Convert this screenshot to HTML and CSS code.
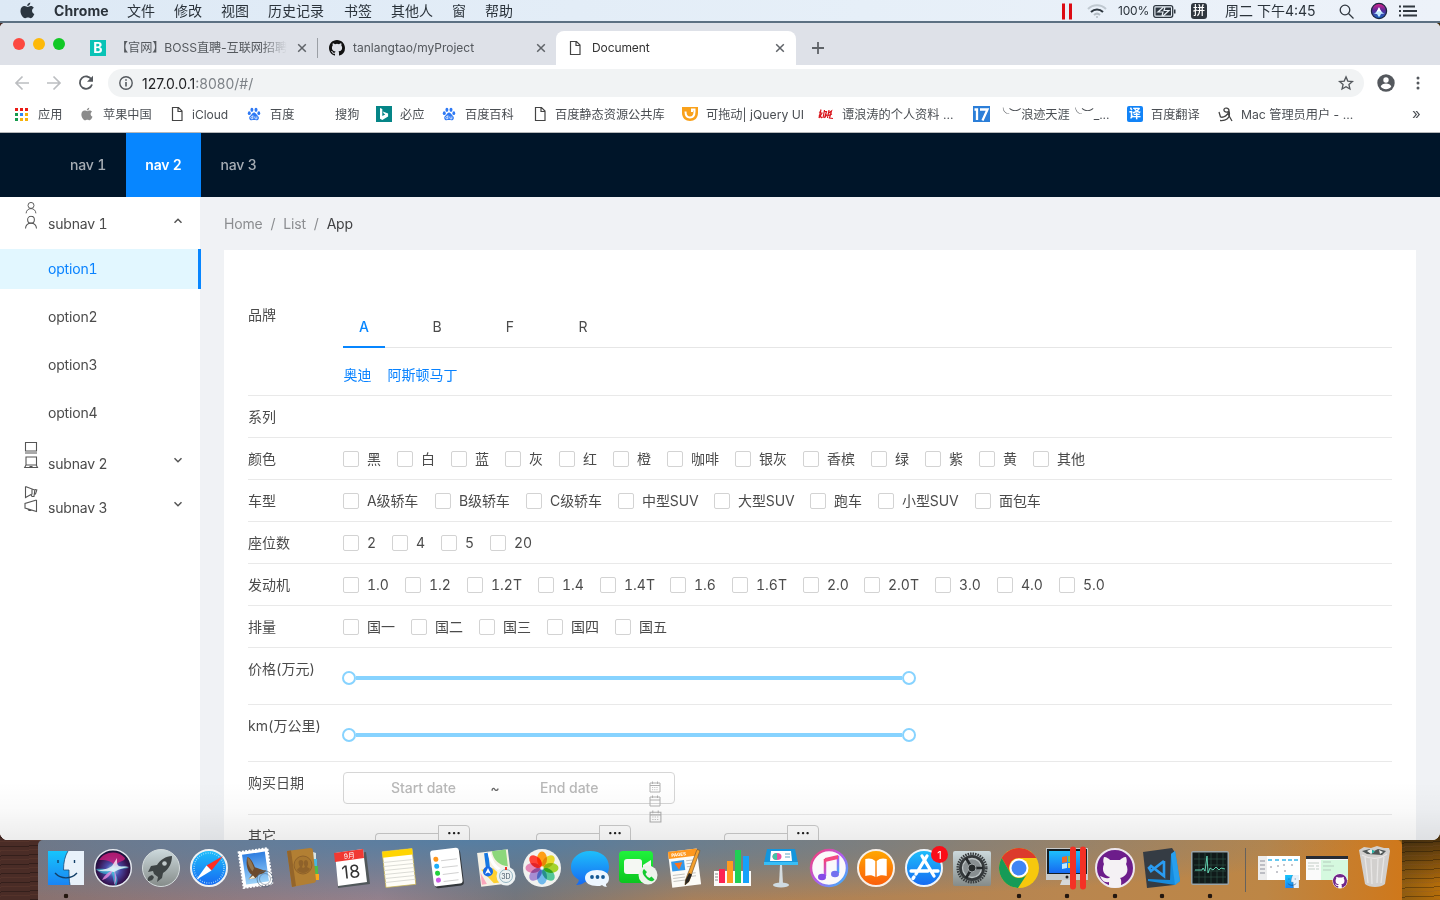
FILE: index.html
```html
<!DOCTYPE html>
<html lang="zh-CN">
<head>
<meta charset="utf-8">
<title>Document</title>
<link rel="stylesheet" href="styles.css">
</head>
<body>
<svg class="defs" width="0" height="0">
  <defs>
    <symbol id="apple" viewBox="0 0 16 18"><path d="M11 .5c.1 1.9-1.500 3.700-3.300 3.700C7.500 2.400 9.200.7 11 .5zM8.300 5.200c.8 0 1.700-.9 3.200-.9 1.200 0 2.500.7 3.200 1.800-2.800 1.700-2.300 5.500.6 6.600-.6 1.700-2.100 4.500-3.900 4.500-1.100 0-1.500-.7-2.900-.7s-1.900.7-3 .7C3 17.200.5 12.900.5 9.500c0-3.300 2.100-5.200 4.300-5.200 1.500 0 2.500.9 3.500.9z"/></symbol>
    <symbol id="file" viewBox="0 0 16 16"><path d="M2.500 1.500h6l3.500 3.500v9.500h-9.500zM8 1.500v4h4" fill="none" stroke="#444" stroke-width="1.200"/></symbol>
    <symbol id="close" viewBox="0 0 10 10"><path d="M1.200 1.200l7.600 7.600M8.800 1.200L1.200 8.800" fill="none" stroke="#5f6368" stroke-width="1.500"/></symbol>
    <symbol id="paw" viewBox="0 0 16 16"><g fill="#2d78f4"><ellipse cx="5.600" cy="3.200" rx="1.700" ry="2.400"/><ellipse cx="10.300" cy="3.200" rx="1.700" ry="2.400"/><ellipse cx="2.600" cy="7" rx="1.700" ry="2.200"/><ellipse cx="13.500" cy="7" rx="1.600" ry="2.200"/><path d="M8 6.300c1.500 0 2.200 1.500 3.500 2.800 1.500 1.400 2.500 2.500 1.900 4.300-.8 2.400-3.200 1.500-5.400 1.500s-4.600.9-5.300-1.500c-.6-2 .6-3.100 2-4.300C6 7.800 6.500 6.300 8 6.300z"/></g><path d="M6.700 9.500v4M6.500 11.100c-2-.5-2.300.5-2.200 1.500.2 1 1.500 1 2.400.6M9 10.800v1.900c0 .8.800.8 2.300.8v-2.700" fill="none" stroke="#fff" stroke-width=".9"/></symbol>
    <symbol id="cal" viewBox="0 0 12 12"><path d="M1 2h10v9H1zM1 4.500h10M3.500.5v2.500M8.500.5v2.500" fill="none" stroke="#b0b0b0"/><path d="M3 6.500h6M3 8.700h6" stroke="#c4c4c4" stroke-dasharray="1.200 1"/></symbol>
    <symbol id="calplain" viewBox="0 0 12 12"><path d="M1 2h10v9H1zM1 5h10M3.500.5v2.500M8.500.5v2.500" fill="none" stroke="#b0b0b0"/></symbol>
    <symbol id="user" viewBox="0 0 14 14"><circle cx="7" cy="4.300" r="3.500"/><path d="M1.300 13.500c.2-3.500 2.700-5.500 5.700-5.500s5.500 2 5.700 5.500"/></symbol>
    <symbol id="down" viewBox="0 0 10 8"><path d="M1.500 2.300L5 5.700l3.500-3.400" fill="none" stroke="#555" stroke-width="1.500"/></symbol>
    <symbol id="octocat" viewBox="0 0 16 16"><path d="M8 0C3.580 0 0 3.580 0 8c0 3.540 2.290 6.530 5.470 7.590.4.070.55-.17.55-.38 0-.19-.01-.82-.01-1.490-2.010.37-2.530-.49-2.690-.94-.09-.23-.48-.94-.82-1.130-.28-.15-.68-.52-.01-.53.63-.01 1.080.58 1.230.82.72 1.210 1.870.87 2.330.66.070-.52.28-.87.51-1.070-1.780-.2-3.640-.89-3.640-3.950 0-.87.31-1.590.82-2.150-.08-.2-.36-1.020.08-2.120 0 0 .67-.21 2.200.82a7.600 7.600 0 014 0c1.530-1.040 2.200-.82 2.200-.82.44 1.100.16 1.920.08 2.120.51.56.82 1.270.82 2.150 0 3.070-1.870 3.750-3.650 3.950.29.25.54.73.54 1.480 0 1.070-.01 1.930-.01 2.200 0 .21.15.46.55.38A8 8 0 0016 8c0-4.420-3.580-8-8-8z"/></symbol>
    <symbol id="finder" viewBox="0 0 36 34"><path d="M0 0h36v34H0z" fill="#e8f1fa"/><path d="M0 0h20c-3 5-4.500 11-4.500 19H21c0 5 0 10 1 15H0z" fill="url(#gFinder)"/><path d="M20 0c-3 5-4.500 11-4.500 19H21c0 5 0 10 1 15" fill="none" stroke="#1c4d79" stroke-width=".8"/><path d="M10 9v3M26.500 9v3M7 22c6 6.500 16 6.500 22 0" fill="none" stroke="#123f68" stroke-width="1.400"/></symbol>
    <linearGradient id="gFinder" x2="0" y2="1"><stop stop-color="#16c5fc"/><stop offset="1" stop-color="#1a84f4"/></linearGradient>
    <linearGradient id="gSil" x2="0" y2="1"><stop stop-color="#ccd9dc"/><stop offset="1" stop-color="#858b89"/></linearGradient>
    <linearGradient id="gBlue" x2="0" y2="1"><stop stop-color="#1ebffb"/><stop offset="1" stop-color="#1669f2"/></linearGradient>
    <linearGradient id="gSky" x2="0" y2="1"><stop stop-color="#2f7ee0"/><stop offset="1" stop-color="#9ed3f8"/></linearGradient>
    <linearGradient id="gOrange" x2="0" y2="1"><stop stop-color="#ffa800"/><stop offset="1" stop-color="#fb5d0c"/></linearGradient>
    <linearGradient id="gGreen" x2="0" y2="1"><stop stop-color="#20f23c"/><stop offset="1" stop-color="#0bc51f"/></linearGradient>
    <linearGradient id="gMusic" x1="0" x2="1" y2="1"><stop stop-color="#fb3b68"/><stop offset=".5" stop-color="#b35cf0"/><stop offset="1" stop-color="#2bbdfa"/></linearGradient>
    <radialGradient id="gSiri" cx=".5" cy=".55" r=".55"><stop stop-color="#7fd9ee"/><stop offset=".35" stop-color="#4a4aa8"/><stop offset=".75" stop-color="#35134f"/><stop offset="1" stop-color="#101433"/></radialGradient>
    <linearGradient id="gSiriTop" x2="0" y2="1"><stop stop-color="#e2208b"/><stop offset=".45" stop-color="#5a2b9a"/><stop offset="1" stop-color="#1268c0"/></linearGradient>
  </defs>
</svg>

<div class="desktop">
  <header class="menubar">
    <div class="menus">
      <svg class="m-apple" width="15" height="17"><use href="#apple"/></svg>
      <b>Chrome</b><span>文件</span><span>修改</span><span>视图</span><span>历史记录</span><span>书签</span><span>其他人</span><span>窗</span><span>帮助</span>
    </div>
    <div class="status">
      <svg width="12" height="17" viewBox="0 0 12 17"><path d="M2.500 .5v16M9.500 .5v16" stroke="#dc0b14" stroke-width="3"/></svg>
      <svg width="20" height="15" viewBox="0 0 20 15" fill="none" stroke-width="2"><path d="M1 5c5-5 13-5 18 0" stroke="#c0c9d1"/><path d="M4 8c3.500-3.500 8.500-3.500 12 0" stroke="#2f3841"/><path d="M7 11c2-1.800 4-1.800 6 0" stroke="#b3bcc4"/><circle cx="10" cy="13" r="1" fill="#b3bcc4"/></svg>
      <span class="pct">100%</span>
      <svg width="23" height="13" viewBox="0 0 23 13"><rect x=".7" y=".7" width="19" height="11.600" rx="2" fill="none" stroke="#2f3841" stroke-width="1.300"/><path d="M2.500 2.500h15.500v8H2.500zM21 4.500h1.500v4H21z" fill="#2f3841"/><path d="M10.500 2L5 7h5l-1 4M10 11l6-5.500h-5l1-3.500" stroke="#e9f0f7" stroke-width="1.200" fill="none"/></svg>
      <span class="ime">拼</span>
      <span class="clock">周二 下午4:45</span>
      <svg width="15" height="15" viewBox="0 0 15 15" fill="none" stroke="#30373f" stroke-width="1.300"><circle cx="6" cy="6" r="4.800"/><path d="M9.500 9.500l5 5"/></svg>
      <svg width="16" height="16" viewBox="0 0 38 38"><circle cx="19" cy="19" r="18" fill="url(#gSiriTop)" stroke="#1b2440" stroke-width="3"/><path d="M6 26c6-2 9-8 13-16 3 8 7 12 13 16-6-1-9-2-11 6h-4c-1-7-5-7-11-6z" fill="#bfe9ff"/><path d="M13 22l6-12 6 12-6-3z" fill="#fff"/></svg>
      <svg width="18" height="12" viewBox="0 0 18 12" stroke="#30373f" stroke-width="2"><path d="M0 1.500h2M4 1.500h12M0 6h2M4 6h14M0 10.500h2M4 10.500h14"/></svg>
    </div>
  </header>

  <main class="window">
    <div class="tabstrip">
      <div class="lights"><i class="red"></i><i class="yellow"></i><i class="green"></i></div>
      <div class="tab tab-boss">
        <span class="boss">B</span><span class="tab-title fade">【官网】BOSS直聘-互联网招聘神</span><svg width="10" height="10"><use href="#close"/></svg>
      </div>
      <div class="tab tab-git">
        <svg width="16" height="16" fill="#111"><use href="#octocat"/></svg><span class="tab-title">tanlangtao/myProject</span><svg width="10" height="10"><use href="#close"/></svg>
      </div>
      <div class="tab tab-doc">
        <svg width="16" height="16"><use href="#file"/></svg><span class="tab-title">Document</span><svg width="10" height="10"><use href="#close"/></svg>
      </div>
      <svg class="plus" width="12" height="12" viewBox="0 0 12 12"><path d="M6 0v12M0 6h12" stroke="#5f6368" stroke-width="1.800"/></svg>
    </div>
    <div class="toolbar">
      <svg width="16" height="16" viewBox="0 0 16 16" fill="none" stroke="#bcbec1" stroke-width="1.700"><path d="M15 8H2M8.500 1.500L2 8l6.500 6.500"/></svg>
      <svg width="16" height="16" viewBox="0 0 16 16" fill="none" stroke="#bcbec1" stroke-width="1.700"><path d="M1 8h13M7.500 1.500L14 8l-6.500 6.500"/></svg>
      <svg width="16" height="16" viewBox="0 0 16 16"><path d="M13.500 4.600A6.200 6.200 0 1014 9.500" fill="none" stroke="#54585d" stroke-width="1.800"/><path d="M15 .7v6H9z" fill="#54585d"/></svg>
      <div class="address">
        <svg width="14" height="14" viewBox="0 0 14 14" fill="none" stroke="#54585d"><circle cx="7" cy="7" r="6.200" stroke-width="1.400"/><path d="M7 6v4.500M7 3.200v1.600" stroke-width="1.600"/></svg>
        <span class="url">127.0.0.1<em>:8080/#/</em></span>
        <svg width="16" height="16" viewBox="0 0 24 24"><path d="M12 2.800l2.700 6.400 6.900.6-5.200 4.500 1.500 6.700-5.900-3.500L6.100 21l1.500-6.700-5.200-4.500 6.900-.6z" fill="none" stroke="#54585d" stroke-width="2"/></svg>
      </div>
      <svg class="profile" width="18" height="18" viewBox="0 0 18 18"><circle cx="9" cy="9" r="8.700" fill="#54585d"/><circle cx="9" cy="6" r="2.700" fill="#fff"/><path d="M3.700 12.500c1.200-4 9.400-4 10.600 0-2.500 3.500-8.100 3.500-10.600 0z" fill="#fff"/></svg>
      <svg width="4" height="14" viewBox="0 0 4 14" fill="#54585d"><circle cx="2" cy="2" r="1.500"/><circle cx="2" cy="7" r="1.500"/><circle cx="2" cy="12" r="1.500"/></svg>
    </div>
    <div class="bookmarks">
      <div><svg width="13" height="13" viewBox="0 0 13 13"><path d="M0 0h3v3H0zM5 0h3v3H5zM10 0h3v3h-3z" fill="#ea1b15"/><path d="M0 5h3v3H0zM0 10h3v3H0z" fill="#169b4d"/><path d="M5 5h3v3H5z" fill="#2e87f5"/><path d="M10 5h3v3h-3zM5 10h3v3H5zM10 10h3v3h-3z" fill="#f7b20a"/></svg><span>应用</span></div>
      <div><svg width="12" height="14" fill="#8b8b8b"><use href="#apple"/></svg><span>苹果中国</span></div>
      <div><svg width="16" height="16"><use href="#file"/></svg><span>iCloud</span></div>
      <div><svg width="14" height="16"><use href="#paw"/></svg><span>百度</span></div>
      <div><span>搜狗</span></div>
      <div><svg width="16" height="16" viewBox="0 0 16 16"><path d="M0 0h16v16H0z" fill="#058587"/><path d="M4 2l2.300.9v7.200l3-1.500-1.500-1-1-2.200 5.300 2v3L6.300 14 4 12.700z" fill="#fff"/></svg><span>必应</span></div>
      <div><svg width="14" height="16"><use href="#paw"/></svg><span>百度百科</span></div>
      <div><svg width="16" height="16"><use href="#file"/></svg><span>百度静态资源公共库</span></div>
      <div><svg width="16" height="14" viewBox="0 0 16 14"><path d="M0 0h16v6c0 5-3.500 8-8 8s-8-3-8-8z" fill="#f9a11b"/><path d="M3.500 4.500c0 4 1.500 6 4.500 6s4.500-2 4.500-6V2.500H10V5" fill="none" stroke="#fff" stroke-width="2"/></svg><span>可拖动| jQuery UI</span></div>
      <div><svg width="16" height="12" viewBox="0 0 16 12" fill="none" stroke="#d9131a" stroke-width="1.200"><path d="M3 1.500L1 10l3-5-3-1M1 7l3 3M6.500 2L5 10M6 3.500h2.500L6.500 10l2.500-3.500M11 2l-1.500 8M10 5.500l3.500-2.500-2 7 3.500.5M9 8l5-2"/></svg><span>谭浪涛的个人资料 ...</span></div>
      <div><svg width="17" height="16" viewBox="0 0 17 16"><path d="M0 0h17v16H0z" fill="#2b7ed8"/><path d="M1.500 3.500H4V14M7 3.500h7.500l-5 11" fill="none" stroke="#fff" stroke-width="2.300"/></svg><span class="sky">╰︶浪迹天涯╰︶_...</span></div>
      <div><b class="yi">译</b><span>百度翻译</span></div>
      <div><svg width="15" height="16" viewBox="0 0 15 16" fill="none" stroke="#444" stroke-width="1.300"><path d="M1 6l1.500 5c3 1 8-2 8.500-6 .3-3-4.500-4-5-1.500S9 7 11 5c1 3 .5 6-2 8s-5 1.500-7 1.500M10 8l4 7"/></svg><span>Mac 管理员用户 - ...</span></div>
      <div class="more">»</div>
    </div>

    <nav class="topnav"><a>nav 1</a><a class="on">nav 2</a><a>nav 3</a></nav>
    <div class="app">
      <aside>
        <div class="sub first"><svg width="14" height="29" viewBox="0 0 14 29" class="line"><use href="#user" x="1" y="-.5" width="12" height="12.500"/><use href="#user" x="0" y="13.500" width="14" height="13.500"/></svg><span>subnav 1</span><svg class="flip" width="10" height="8"><use href="#down"/></svg></div>
        <ul><li class="on">option1</li><li>option2</li><li>option3</li><li>option4</li></ul>
        <div class="sub"><svg width="14" height="28" viewBox="0 0 14 28" class="line"><path d="M1.500 .5h11v8.500h-11zM1 11h12M2 15h10.500v8H2zM2 23L.7 25.500h12.800l-1.300-2.500M5.500 24.500h3"/></svg><span>subnav 2</span><svg width="10" height="8"><use href="#down"/></svg></div>
        <div class="sub"><svg width="14" height="28" viewBox="0 0 14 28" class="line"><path d="M1.500.5v11l5.500-3 1 2h2l.8-6.500L1.500.5M8 3.500v5M10.800 3.500l2 .5-1.300 4h-1M12.500 14v11.500L1 22v-4.500L12.500 14M4 23c.5 1.500 2 2 3.500 1"/></svg><span>subnav 3</span><svg width="10" height="8"><use href="#down"/></svg></div>
      </aside>
      <section class="content">
        <div class="crumbs"><span>Home</span><i>/</i><span>List</span><i>/</i><b>App</b></div>
        <div class="panel">
          <div class="row brand"><label>品牌</label>
            <div class="brand-body">
              <div class="letters"><a class="on">A</a><a>B</a><a>F</a><a>R</a></div>
              <div class="makes"><a>奥迪</a><a>阿斯顿马丁</a></div>
            </div>
          </div>
          <div class="row"><label>系列</label></div>
          <div class="row"><label>颜色</label><div class="checks colors"><span>黑</span><span>白</span><span>蓝</span><span>灰</span><span>红</span><span>橙</span><span>咖啡</span><span>银灰</span><span>香槟</span><span>绿</span><span>紫</span><span>黄</span><span>其他</span></div></div>
          <div class="row"><label>车型</label><div class="checks types"><span>A级轿车</span><span>B级轿车</span><span>C级轿车</span><span>中型SUV</span><span>大型SUV</span><span>跑车</span><span>小型SUV</span><span>面包车</span></div></div>
          <div class="row"><label>座位数</label><div class="checks seats"><span>2</span><span>4</span><span>5</span><span>20</span></div></div>
          <div class="row"><label>发动机</label><div class="checks engines"><span>1.0</span><span>1.2</span><span>1.2T</span><span>1.4</span><span>1.4T</span><span>1.6</span><span>1.6T</span><span>2.0</span><span>2.0T</span><span>3.0</span><span>4.0</span><span>5.0</span></div></div>
          <div class="row"><label>排量</label><div class="checks emission"><span>国一</span><span>国二</span><span>国三</span><span>国四</span><span>国五</span></div></div>
          <div class="row tall"><label>价格(万元)</label><div class="slider"><i></i><b></b><i></i></div></div>
          <div class="row tall"><label>km(万公里)</label><div class="slider"><i></i><b></b><i></i></div></div>
          <div class="row date"><label>购买日期</label><div class="range"><span>Start date</span><em>~</em><span>End date</span><div class="cals"><svg width="12" height="12"><use href="#cal"/></svg><svg width="12" height="12"><use href="#calplain"/></svg><svg width="13" height="13"><use href="#cal"/></svg></div></div></div>
          <div class="row other"><label>其它</label><div class="groups"><div><i></i><b>···</b></div><div><i></i><b>···</b></div><div><i></i><b>···</b></div></div></div>
        </div>
      </section>
    </div>
    <div class="shade"></div>
  </main>

  <footer class="dock">
    <div class="apps">
      <svg class="run" viewBox="0 0 44 44"><use href="#finder" x="4" y="5" width="36" height="34"/></svg>
      <svg viewBox="0 0 44 44"><circle cx="22" cy="22" r="18.300" fill="url(#gSiri)" stroke="#e4e8ee" stroke-width="1.500"/><path d="M8 14c5-8 18-11 26-2 0 4-6 2-10 8-4-6-10-6-16-6z" fill="#d61f7d" opacity=".75"/><path d="M5 23c7-1 12 1 17 0s10-5 16-1c-5 1-10 0-15 4 3 4 5 8 2 14-3-4-3-9-4-13-5 2-12 1-16-4z" fill="#35cfe0" opacity=".6"/><path d="M22 24c-5 2-9 6-11 10 5-1 9-5 11-10zM23 24c1 6 1 11 0 15 3-4 3-10 0-15z" fill="#ee8fe0" opacity=".8"/><path d="M6 24c8 0 12-2 15-4l5-8c0 5 0 7 2 8 3 1 6 0 10 1-6 1-10 2-13 4s-4 0-6 0-8 1-13-1z" fill="#fff" opacity=".75"/></svg>
      <svg viewBox="0 0 44 44"><circle cx="22" cy="22" r="18.500" fill="url(#gSil)" stroke="#d5dcdd"/><path d="M33 10c-6 0-12 4-15 9l-6 1-3 6 5-1 1 3 4 3-1 5 5-4 1-5c6-4 9-10 9-17zM13 29c-3 1-5 3-4 6 3 0 5-1 6-4z" fill="#3e4445"/><circle cx="25.500" cy="17.500" r="2.300" fill="#c1c9ca"/></svg>
      <svg viewBox="0 0 44 44"><circle cx="22" cy="22" r="18" fill="url(#gBlue)" stroke="#f0f2f3" stroke-width="2"/><circle cx="22" cy="22" r="15" fill="none" stroke="#b7e4fd" stroke-width="1.500" stroke-dasharray=".7 1.600"/><path d="M36 10L19.500 19.500l5 5z" fill="#ff2d23"/><path d="M9 34l10.500-14.500 5 5z" fill="#fff"/></svg>
      <svg viewBox="0 0 44 44"><g transform="rotate(-8 22 22)"><path d="M7 4h29v36H7z" fill="#fff" stroke="#fff" stroke-width="2" stroke-dasharray="2 1.300"/><path d="M10 7h23v30H10z" fill="url(#gSky)"/><path d="M15 10c3 1 5 7 6 11 4 2 7 4 11 5-2 2-5 3-8 3l-4 3-7 0 4-4c-4-3-5-12-2-18z" fill="#6b4a2d"/><path d="M15 10c-1 5 0 10 3 15l2-3c-1-4-2-9-5-12z" fill="#94764f"/><path d="M13 32l5-3 2 3z" fill="#f5ecd0"/></g><circle cx="31" cy="33" r="8" fill="none" stroke="#4f6376" opacity=".6"/><circle cx="31" cy="33" r="5.500" fill="none" stroke="#4f6376" opacity=".5"/></svg>
      <svg viewBox="0 0 44 44"><path d="M31 6l3 1v6h-3z" fill="#d8e4e6"/><path d="M31 13h4v7h-4z" fill="#49b6e0"/><path d="M32 20h4v8h-4z" fill="#4ebb4a"/><path d="M33 28h4v6h-4z" fill="#f9a91c"/><path d="M5 5l23-3q3 0 3 3l3 29q0 3-3 3L10 41z" fill="#b27f33"/><path d="M5 5l4-.5L14 40l-4 1z" fill="#94652a"/><circle cx="21" cy="19" r="9" fill="#a87730" stroke="#8f622a"/><path d="M15 24c1-2 2-2 3-3-2-4-2-7 1-7s3 4 1 7l1 1 2-1c-2-4-1-7 1-7s3 4 1 7c1 1 3 1 3 2-3 5-10 5-13 1z" fill="#8f622a"/></svg>
      <svg viewBox="0 0 44 44"><path d="M6 10l30-4 4 32-32 4z" fill="#51585b"/><path d="M5 7l28-4 4 33-29 4z" fill="#fff"/><path d="M4 7l29-4 1 9-29 4z" fill="#f13932"/><text x="19.500" y="12" transform="rotate(-7 22 11)" class="i-mon">9月</text><text x="21" y="32" transform="rotate(-6 22 27)" class="i-day">18</text></svg>
      <svg viewBox="0 0 44 44"><g transform="rotate(-6 22 22)"><path d="M7 4h30v36H7z" fill="#fffef8" stroke="#cab34d" stroke-width=".7"/><path d="M7 4h30v6H7z" fill="#ffd400"/><path d="M7 15h30M7 19h30M7 23h30M7 27h30M7 31h30M7 35h30" stroke="#dcdcd6"/></g></svg>
      <svg viewBox="0 0 44 44"><g transform="rotate(-7 22 22)"><rect x="8" y="5" width="29" height="36" rx="3" fill="#33373b"/><rect x="7" y="3" width="29" height="36" rx="3" fill="#fff"/><circle cx="12" cy="12" r="2.500" fill="#ff951b"/><circle cx="12" cy="19" r="2.500" fill="#1badf8"/><circle cx="12" cy="26" r="2.500" fill="#21d13d"/><circle cx="12" cy="33" r="2.500" fill="#ca5de6"/><path d="M17 14h16M17 21h16M17 28h16M17 35h15" stroke="#d1d1d1"/></g></svg>
      <svg viewBox="0 0 44 44"><g transform="rotate(-7 22 22)"><path d="M6 5h31v34H6z" fill="#f5f1e5"/><path d="M21 5h14v17C27 20 21 14 21 5z" fill="#8cd77b"/><path d="M8 22h12l13 15H19z" fill="#ffd130"/><path d="M7 25l5 12H7z" fill="#fba6bb"/><path d="M15 6v19" stroke="#1678e2" stroke-width="4"/><path d="M18 6c1 12 7 20 18 22" fill="none" stroke="#fff" stroke-width="3"/></g><circle cx="15" cy="25.500" r="5" fill="#176ae5"/><path d="M15 22l3 6-3-1.500-3 1.500z" fill="#fff"/><circle cx="33" cy="30" r="9.500" fill="#edf2f3"/><circle cx="33" cy="30" r="6.500" fill="none" stroke="#7ca4b5" stroke-width=".8"/><path d="M33 21v3" stroke="#e32" stroke-width="2"/><text x="33" y="32.500" class="i-3d">3D</text></svg>
      <svg viewBox="0 0 44 44"><circle cx="22" cy="22" r="19" fill="#f2f2ef"/><g class="petals"><ellipse cx="22" cy="13" rx="5" ry="7.500" fill="#ff9e16"/><ellipse cx="22" cy="13" rx="5" ry="7.500" fill="#e8d92a" transform="rotate(45 22 22)"/><ellipse cx="22" cy="13" rx="5" ry="7.500" fill="#a4d32c" transform="rotate(90 22 22)"/><ellipse cx="22" cy="13" rx="5" ry="7.500" fill="#54c69a" transform="rotate(135 22 22)"/><ellipse cx="22" cy="13" rx="5" ry="7.500" fill="#71b9ec" transform="rotate(180 22 22)"/><ellipse cx="22" cy="13" rx="5" ry="7.500" fill="#a78dd2" transform="rotate(225 22 22)"/><ellipse cx="22" cy="13" rx="5" ry="7.500" fill="#e486b5" transform="rotate(270 22 22)"/><ellipse cx="22" cy="13" rx="5" ry="7.500" fill="#ff4237" transform="rotate(315 22 22)"/></g></svg>
      <svg viewBox="0 0 44 44"><path d="M22 5C11 5 3 12 3 21c0 6 3 10 8 13-1 3-2 4-3 5 4 0 7-1 9-3 13 3 24-5 24-15S33 5 22 5z" fill="url(#gBlue)"/><path d="M29 24c-7 0-12 3-12 8s5 8 12 8c2 0 4 0 5-1 1 1 3 2 5 2-1-1-1-2-1-3 2-1 3-3 3-6 0-5-5-8-12-8z" fill="#edf6ff"/><g fill="#155894"><circle cx="24" cy="31" r="1.900"/><circle cx="29.500" cy="31" r="1.900"/><circle cx="35" cy="31" r="1.900"/></g></svg>
      <svg viewBox="0 0 44 44"><rect x="3" y="5" width="34" height="32" rx="4" fill="url(#gGreen)"/><rect x="8" y="13" width="18" height="15" rx="3" fill="#f5f8f3"/><path d="M27 19l8-5v13l-8-5z" fill="#f5f8f3"/><circle cx="32" cy="29" r="9.500" fill="#eef3ec"/><path d="M28 23l3 3-1.500 2c1 2 2 3 4 4l2-1.500 3 3c-2 3-5 2-8-1-4-4-5-7-2.500-9.500z" fill="#13ca30"/></svg>
      <svg viewBox="0 0 44 44"><g transform="rotate(-7 22 22)"><path d="M7 4h29v36H7z" fill="#fcfbf7"/><path d="M7 4h29v7H7z" fill="#ff981e"/><path d="M9 14h13v10H9z" fill="#3299eb"/><path d="M12 16h8l-4 7z" fill="#fc721c"/><path d="M24 15h9M24 18h9M24 21h8M9 28h12M9 31h12M9 34h12M24 28h8M24 31h8" stroke="#c4c4c1"/><text x="10" y="9.500" class="i-pages">PAGES</text></g><path d="M34 3.500L22.500 34l-.5 5 4-3.500L37 4.500z" fill="#f5a12d" stroke="#7b5a33" stroke-width=".7"/><path d="M26 27l-3.500 7-.5 5 4-3.500 3-7z" fill="#282522"/></svg>
      <svg viewBox="0 0 44 44"><path d="M3 25h37v15H3z" fill="#fbfbf9"/><path d="M8 23h6v14H8z" fill="#fc2452"/><path d="M16 15h6v22h-6z" fill="#ff9b20"/><path d="M24 4h6v33h-6z" fill="#20cf55"/><path d="M32 10h6v27h-6z" fill="#14a2fa"/><path d="M4 28h3M4 31h3M4 34h3" stroke="#888"/></svg>
      <svg viewBox="0 0 44 44"><path d="M8 3h28l3 14H5z" fill="#1495dc"/><path d="M5 16h34v3H5z" fill="#38bef6"/><path d="M12 5h20l1 10H11z" fill="#fff"/><path d="M26 8h5M26 11h5" stroke="#5ca6c4"/><ellipse cx="18" cy="10.500" rx="4.500" ry="3.500" fill="#e953a1"/><path d="M18 7c-6 0-6 7 0 7z" fill="#3fc7a7"/><path d="M21 19h2l1 19h-4z" fill="#d4dce0"/><ellipse cx="22" cy="39" rx="8" ry="2.500" fill="#cfdbe2"/></svg>
      <svg viewBox="0 0 44 44"><circle cx="22" cy="22" r="18" fill="#fbf9fb" stroke="url(#gMusic)" stroke-width="2.500"/><path d="M18 30V14l13-3v16" fill="none" stroke="url(#gMusic)" stroke-width="2.500"/><path d="M18 12l13-3v4l-13 3z" fill="#f44a83"/><ellipse cx="15" cy="31" rx="4" ry="3.300" fill="#854be7"/><ellipse cx="28" cy="28" rx="4" ry="3.300" fill="#7370ef"/></svg>
      <svg viewBox="0 0 44 44"><circle cx="22" cy="22" r="18" fill="url(#gOrange)" stroke="#f7efe8" stroke-width="2"/><path d="M21.300 15c-3-3-7-3-10-2v17c4-1 7-1 10 1zM22.700 15c3-3 7-3 10-2v17c-4-1-7-1-10 1z" fill="#fff"/></svg>
      <svg viewBox="0 0 44 44"><circle cx="22" cy="22" r="18" fill="url(#gBlue)" stroke="#f0f5fa" stroke-width="2"/><path d="M20 10l12 20M25 10L14 28M9 25h17M31 25h5M12 31l-1 1.500" fill="none" stroke="#fff" stroke-width="3.300" stroke-linecap="round"/><circle cx="37.500" cy="8.500" r="8.500" fill="#fb0d18"/><text x="37.500" y="12.500" class="i-one">1</text></svg>
      <svg viewBox="0 0 44 44"><rect x="3" y="5" width="38" height="35" rx="2" fill="url(#gSil)"/><circle cx="22" cy="22" r="14.300" fill="none" stroke="#363a3c" stroke-width="2.500" stroke-dasharray="1.500 1"/><circle cx="22" cy="22" r="13" fill="#34383a"/><circle cx="22" cy="22" r="9.500" fill="#888e90" stroke="#bdc4c5" stroke-width="1.300"/><path d="M22 22h11M22 22l-6-10M22 22l-6 10" stroke="#24282a" stroke-width="2.500"/><circle cx="22" cy="22" r="4" fill="#272b2c" stroke="#9fa5a7"/></svg>
      <svg class="run" viewBox="0 0 44 44"><circle cx="22" cy="22" r="20" fill="#f7c80d"/><path d="M4.700 12A20 20 0 0139.300 12H22a10 10 0 00-8.700 15z" fill="#dc3a2c"/><path d="M4.700 12A20 20 0 0021 42l9.700-15a10 10 0 01-17.400 0z" fill="#169b57"/><circle cx="22" cy="22" r="9.500" fill="#fff"/><circle cx="22" cy="22" r="7.500" fill="#4085f4"/></svg>
      <svg class="run" viewBox="0 0 44 44"><path d="M1 2h42v32H1z" fill="#c8cbcc"/><path d="M2 3h40v25H2z" fill="#141d23"/><path d="M4 5h36v22H4z" fill="url(#gBlue)"/><path d="M17 11l5-1v6l-5 1z" fill="#f06a25"/><path d="M23 10h4v6h-4z" fill="#82c33c"/><path d="M17 18l5-1v5l-5 1z" fill="#bfeaff"/><path d="M23 17h4v5h-4z" fill="#fbc728"/><path d="M17 34h10l2 5H15z" fill="#d7d9da"/><circle cx="22" cy="31" r="1.500" fill="#222"/><path d="M28 3.500v37M38 3.500v37" stroke="#f43125" stroke-width="6" stroke-linecap="round"/></svg>
      <svg class="run" viewBox="0 0 44 44"><circle cx="22" cy="22" r="19" fill="#6d1d8b" stroke="#ede6ed" stroke-width="2"/><path d="M11 11c3 0 5 2 6 3h10c1-1 3-3 6-3 1 3 1 5 0 7 4 8-1 13-6 14 2 2 1 6 1 9-4 1-8 1-12 0v-5c-5 1-7-2-9-6 4 1 5 3 9 2l1-1c-5-1-9-6-6-13-1-2-1-4 0-7z" fill="#f4f1f4"/></svg>
      <svg class="run" viewBox="0 0 44 44"><path d="M3 6l29-4 2 3v34l-27 3z" fill="#353c44"/><path d="M31 8l4-3 5 30-5 4-27-4v-2l22 1z" fill="#168bdd"/><path d="M31 8l4-3 5 30-5 4z" fill="#279fee"/><path d="M24 15v15L11 20l-2 2 2 3 13-10" fill="none" stroke="#2a9cf2" stroke-width="2.600"/></svg>
      <svg class="run" viewBox="0 0 44 44"><rect x="3" y="5" width="38" height="34" rx="2" fill="#9aa5a8"/><path d="M4.500 6.500h35v31h-35z" fill="#101a1a"/><path d="M6 13h32M6 19h32M6 25h32M6 31h32M11 7v30M17 7v30M23 7v30M29 7v30M35 7v30" stroke="#2d5045" stroke-width=".7"/><path d="M7 24h7l1-2 2 3 2-15 1 17 2-5 3 2 3-3 3 3 2-2 4 1" fill="none" stroke="#69e0bd" stroke-width=".9"/></svg>
    </div>
    <i class="divider"></i>
    <svg class="thumb" width="44" height="44" viewBox="0 0 44 44"><path d="M1 10h42v24H1z" fill="#fff"/><path d="M1 10h9v24H1z" fill="#ededed"/><path d="M11 14h4M18 14h4M25 14h4M31 14h4M37 14h4" stroke="#67c8ef" stroke-width="2"/><path d="M3 15h5M3 19h5M3 23h5M3 27h5M13 21h2M20 20h2M26 19h2M34 19h2M19 26h2M27 25h2" stroke="#8d8f9b"/><use href="#finder" x="28" y="29" width="14" height="13"/></svg>
    <svg class="thumb" width="44" height="44" viewBox="0 0 44 44"><path d="M1 10h42v24H1z" fill="#fafafa"/><path d="M1 10h42v3H1z" fill="#272b34"/><path d="M16 14h27v20H16z" fill="#d5f9df"/><path d="M3 17h8M3 20h6M3 23h7M11 17h3M11 20h3M11 23h3M18 16h8M18 20h11M18 24h8" stroke="#a9b9af" stroke-width=".7"/><circle cx="35" cy="35" r="7.500" fill="#fff"/><use href="#octocat" x="28" y="28" width="14" height="14" fill="#70288a"/></svg>
    <svg class="thumb" width="44" height="44" viewBox="0 0 44 44"><path d="M6 4l5-3 7 1 6-2 7 2h5l1 3-5 33c-4 4-16 4-20 0z" fill="#d2d0ce"/><path d="M9 5l8-2 4 2 4-2 8 2-4 4-15-1z" fill="#4f5656"/><path d="M14 5l4-2 3 3-3 2zM26 4l4 2-3 2z" fill="#eef1ee"/><path d="M19 3.500l3 2-3 2z" fill="#22b4a7"/><path d="M12 11l3 26M18 13l1 25M25 13l-1 24M31 11l-3 26M9 9c9 5 18 4 25-1" fill="none" stroke="#f1f0ef" stroke-width="1.300" opacity=".7"/></svg>
  </footer>
</div>
</body>
</html>
```

FILE: styles.css
```css
*, *::before { box-sizing: border-box; }
body { margin: 0; font-family: Inter, "Noto Sans CJK SC", sans-serif; font-size: 14px; color: #4b4b4b; }
svg { display: block; flex: none; overflow: visible; }
ul { margin: 0; padding: 0; list-style: none; }
i, em { font-style: normal; }
.defs { position: absolute; }

.desktop {
  width: 1440px; height: 900px; overflow: hidden; display: flex; flex-direction: column;
  background:
    repeating-linear-gradient(178deg, rgba(0,0,0,.3) 0 1px, transparent 1px 4px, rgba(130,80,60,.18) 4px 5px, transparent 5px 9px),
    linear-gradient(180deg, rgba(40,30,15,.8) 835px, transparent 885px) 100% 0 / 38px 100% no-repeat,
    linear-gradient(90deg, #4a2c26 0 38px, #5c6f80 60px 1380px, #8f5c10 1402px, #b56d0a);
}
.menubar { height: 23px; flex: none; border-bottom: 2px solid #5c7082; background: linear-gradient(90deg, #dde9f5, #e6eff8 60%, #edf2f9); color: #2b333b; display: flex; justify-content: space-between; line-height: 22px; white-space: nowrap; }
.menus { display: grid; grid-template-columns: 34px 73px 47px 47px 47px 76px 47px 61px 33px 40px; padding-left: 20px; height: 21px; }
.menus b { font-weight: 700; letter-spacing: .1px; }
.m-apple { fill: #2c3640; margin-top: 2px; }
.status { display: grid; grid-template-columns: 26px 31px 35px 38px 34px 114px 32px 28px 41px; height: 21px; align-items: center; }
.pct { font-size: 12px; letter-spacing: -.2px; }
.ime { width: 16px; height: 16px; border-radius: 3px; background: #30373f; color: #fff; font-size: 12px; line-height: 15px; text-align: center; font-weight: 500; }
.clock { font-size: 14px; }

.window { height: 817px; flex: none; position: relative; overflow: hidden; border-radius: 5px 5px 8px 8px; background: #fff; }
.tabstrip { height: 42px; background: #dee1e8; display: flex; padding-left: 12px; color: #54585d; font-size: 12px; }
.lights { display: flex; gap: 8px; width: 66px; padding: 15px 0 0 1px; }
.lights i { width: 12px; height: 12px; border-radius: 50%; flex: none; }
.red { background: #fc4840; }
.yellow { background: #fdb90a; }
.green { background: #11c825; }
.tab { height: 34px; margin-top: 8px; display: flex; align-items: center; white-space: nowrap; line-height: 18px; }
.tab-title { flex: 1; overflow: hidden; padding-bottom: 1px; }
.tab-boss { width: 239px; padding: 0 10px 0 12px; }
.tab-boss svg { margin-left: 10px; }
.boss { width: 16px; height: 16px; margin-right: 10px; background: #09c3b6; color: #fff; font: 700 14px/16px Inter, sans-serif; text-align: center; }
.fade { font-size: 12.200px; letter-spacing: -.1px; -webkit-mask-image: linear-gradient(90deg, #000 85%, transparent); mask-image: linear-gradient(90deg, #000 85%, transparent); }
.tab-git { width: 239px; padding: 0 10px 0 12px; background: linear-gradient(#9b9fa5, #9b9fa5) 0 50% / 1px 20px no-repeat; }
.tab-git .tab-title { margin-left: 8px; }
.tab-doc { width: 240px; padding: 0 11px 0 12px; background: #fff; border-radius: 8px 8px 0 0; color: #333; }
.tab-doc .tab-title { margin-left: 8px; letter-spacing: -.1px; }
.plus { margin: 19px 0 0 16px; }
.toolbar { height: 36px; display: grid; grid-template-columns: 32px 32px 30px 1256px 52px 10px; padding-left: 14px; align-items: center; }
.address { height: 28px; border-radius: 14px; background: #f1f3f4; display: flex; align-items: center; padding: 0 10px 0 11px; }
.url { flex: 1; margin-left: 9px; color: #202124; font-size: 14px; }
.url em { color: #7d8287; }
.profile { margin-left: 13px; }
.bookmarks { height: 32px; border-bottom: 1px solid #b6b8ba; display: grid; grid-template-columns: 66px 90px 76px 88px 41px 66px 91px 149px 136px 155px 154px 91px 194px 20px; padding: 0 0 5px 15px; font-size: 12.200px; color: #4a4e53; white-space: nowrap; }
.bookmarks > div { display: grid; grid-template-columns: 23px auto; justify-content: start; align-items: center; }
.bookmarks > div:nth-child(2), .bookmarks > div:nth-child(3) { grid-template-columns: 22px auto; }
.bookmarks > div:nth-child(3) { font-size: 12px; margin-left: -1px; }
.bookmarks > div:nth-child(5) { grid-template-columns: auto; }
.bookmarks > div:nth-child(n+6) { grid-template-columns: 24px auto; }
.bookmarks > div:nth-child(7), .bookmarks > div:nth-child(13) { grid-template-columns: 23px auto; }
.bookmarks > div:nth-child(8) { grid-template-columns: 22px auto; }
.bookmarks .sky { letter-spacing: -.1px; }
.yi { width: 16px; height: 16px; border-radius: 2px; background: #1283f7; color: #fff; font-size: 12px; line-height: 15px; text-align: center; }
.bookmarks > .more { display: block; font-size: 15px; line-height: 26px; }

.topnav { height: 64px; background: #001529; display: flex; padding-left: 51px; font-feature-settings: "tnum"; letter-spacing: -.2px; }
.topnav a { width: 75px; text-align: center; padding-right: 1px; line-height: 64px; color: #a6adb4; font-weight: 500; }
.topnav .on { background: #0786ff; color: #fff; font-weight: 600; padding-right: 0; }
.topnav a:last-child { padding-right: 0; }
.app { display: flex; height: 643px; background: #f0f2f5; font-feature-settings: "tnum"; }
aside { width: 200px; background: #fff; flex: none; letter-spacing: -.18px; }
.sub { height: 44px; display: grid; grid-template-columns: 24px 125px 10px; padding-left: 24px; line-height: 44px; }
.sub > svg:last-child { margin-top: 14px; }
.sub.first { height: 52px; line-height: 54px; }
.sub.first > svg { margin-top: 5px; }
.sub.first > svg.flip { margin-top: 20px; transform: rotate(180deg); }
.line { fill: none; stroke: #555; stroke-width: 1.100; }
aside ul { margin-bottom: 9px; display: grid; gap: 8px; }
aside li { height: 40px; line-height: 40px; padding-left: 48px; }
aside li.on { width: 201px; background: #e2f7ff; color: #0882ff; border-right: 3px solid #0786ff; }
.content { width: 1240px; padding: 0 24px; }
.crumbs { height: 53px; line-height: 54px; display: flex; color: #8b8d90; letter-spacing: -.2px; }
.crumbs i { margin: 0 8px; }
.crumbs b { font-weight: 400; color: #414244; }
.panel { background: #fff; padding: 44px 24px 0; height: 600px; }
.row { height: 42px; border-bottom: 1px solid #e9e9e9; display: grid; grid-template-columns: 95px 1fr; line-height: 42px; white-space: nowrap; }
.brand { height: 102px; }
.letters { height: 54px; border-bottom: 1px solid #e6e6e6; display: flex; gap: 31px; }
.letters a { width: 42px; height: 54px; line-height: 66px; text-align: center; }
.letters .on { color: #0786ff; border-bottom: 2px solid #0786ff; font-weight: 500; }
.makes { display: flex; gap: 16px; line-height: 54px; padding-left: .5px; color: #0882ff; }
.checks { display: grid; align-items: center; }
.checks span { display: flex; align-items: center; }
.checks span::before { content: ""; width: 16px; height: 16px; border: 1px solid #d3d3d3; border-radius: 2px; background: #fff; margin-right: 8px; flex: none; }
.colors { grid-template-columns: repeat(6, 54px) repeat(3, 68px) repeat(3, 54px) 68px; }
.types { grid-template-columns: 92px 91px 92px 96px 96px 68px 97px 90px; letter-spacing: -.1px; }
.seats { grid-template-columns: repeat(3, 49px) 60px; }
.engines { grid-template-columns: 62px 62px 71px 62px 70px 62px 71px 61px 71px 62px 62px 62px; }
.emission { grid-template-columns: repeat(5, 68px); }
.tall { height: 57px; }
.slider { height: 14px; width: 574px; margin: 23px 0 0 -1px; display: flex; align-items: center; }
.slider i { width: 14px; height: 14px; border: 2px solid #87d3ff; border-radius: 50%; background: #fff; }
.slider b { flex: 1; height: 4px; background: #87d3ff; }
.date { height: 53px; }
.range { width: 332px; height: 32px; margin-top: 10px; border: 1px solid #d6d6d6; border-radius: 4px; display: grid; grid-template-columns: 47px 95px 18px 36px 109px 20px; line-height: 30px; color: #b8b8b8; font-weight: 500; letter-spacing: -.05px; }
.range > span:first-child { grid-column: 2; }
.range > em { color: #666; text-align: center; }
.range > span:nth-child(3) { grid-column: 5; }
.cals { width: 12px; margin-top: 8px; display: flex; flex-direction: column; gap: 2px; height: 45px; }
.cals svg:last-child { margin-top: 1px; }
.groups { display: grid; grid-template-columns: 161px 188px 95px; padding-left: 32px; }
.groups div { display: flex; align-items: flex-start; padding-top: 10px; }
.groups i { width: 63px; height: 28px; margin-top: 8px; border: 1px solid #ccc; border-right: 0; border-radius: 4px 0 0 0; }
.groups b { width: 32px; height: 30px; border: 1px solid #ccc; border-radius: 0 4px 0 0; line-height: 13px; text-align: center; color: #222; }
.shade { position: absolute; inset: auto 0 0; height: 58px; background: linear-gradient(transparent, rgba(0,0,0,.025) 50%, rgba(0,0,0,.075)); pointer-events: none; }

.dock { width: 1364px; height: 60px; margin-left: 38px; border-radius: 5px 5px 0 0; display: flex; background: radial-gradient(ellipse 900px 64px at 430px 0, rgba(83,126,164,.95), rgba(90,124,154,.55) 50%, transparent), linear-gradient(90deg, #897270, #98818b 25%, #777578 35%, #ab8058 48%, #b9864f 75%, #bd8645 90%, #cf781b); }
.apps { display: grid; grid-template-columns: repeat(25, 47.700px); padding-left: 3.500px; width: 1207px; height: 60px; }
.apps svg { width: 44px; height: 44px; margin: 6px 0 0 2px; }
.apps .run { box-sizing: content-box; padding-bottom: 10px; background: radial-gradient(circle, #24170f 2px, transparent 2.600px) 50% 46px / 8px 8px no-repeat; }
.divider { width: 1px; height: 44px; margin: 8px 11px 0 0; background: #66625d; }
.thumb { margin: 6px 4px 0 0; }
.petals { isolation: isolate; }
.petals ellipse { mix-blend-mode: multiply; }
svg text { font-family: Inter, "Noto Sans CJK SC", sans-serif; text-anchor: middle; }
svg text.i-mon { font-size: 7px; fill: #fff; }
svg text.i-day { font-size: 18px; fill: #333; }
svg text.i-3d { font-size: 7px; fill: #456; }
svg text.i-pages { font-size: 4.500px; fill: #fff; font-weight: 700; text-anchor: start; }
svg text.i-one { font-size: 11px; fill: #fff; }
```
